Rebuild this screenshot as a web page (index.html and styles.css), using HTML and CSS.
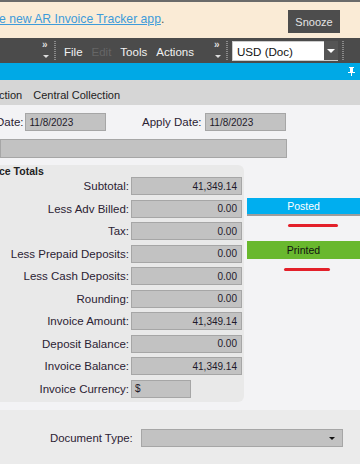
FILE: index.html
```html
<!DOCTYPE html>
<html lang="en">
<head>
    <meta charset="UTF-8">
    <meta name="viewport" content="width=device-width, initial-scale=1.0">
    <title>AR Invoice</title>
    <link rel="stylesheet" href="styles.css">
</head>
<body>
    <div class="top-line"></div>

    <div class="banner">
        <p class="banner-text"><a href="#" class="banner-link">e new AR Invoice Tracker app</a>.</p>
        <button class="snooze-btn">Snooze</button>
    </div>

    <div class="toolbar">
        <div class="overflow">
            <span class="chevron">&raquo;</span>
            <span class="overflow-arrow"></span>
        </div>
        <span class="grip"></span>
        <nav class="menu">
            <span class="menu-item">File</span>
            <span class="menu-item disabled">Edit</span>
            <span class="menu-item">Tools</span>
            <span class="menu-item">Actions</span>
        </nav>
        <div class="overflow">
            <span class="chevron">&raquo;</span>
            <span class="overflow-arrow"></span>
        </div>
        <span class="grip"></span>
        <div class="currency-select">
            <span class="currency-value">USD (Doc)</span>
            <span class="currency-btn"><span class="arrow-white"></span></span>
        </div>
        <span class="grip"></span>
    </div>

    <div class="title-bar">
        <svg class="pin" width="7" height="9" viewBox="0 0 7 9">
            <rect x="1" y="0" width="5" height="1" fill="#fff"/>
            <rect x="2" y="1" width="3" height="4" fill="#fff"/>
            <rect x="0" y="5" width="7" height="1" fill="#fff"/>
            <rect x="3" y="6" width="1" height="3" fill="#fff"/>
        </svg>
    </div>

    <div class="tabs">
        <span class="tab first">ction</span>
        <span class="tab">Central Collection</span>
    </div>

    <main class="content">
        <div class="date-row">
            <label class="date-label">Date:</label>
            <div class="field date-field">11/8/2023</div>
            <label class="apply-label">Apply Date:</label>
            <div class="field date-field">11/8/2023</div>
        </div>

        <div class="field wide-field"></div>

        <div class="totals-area">
            <section class="totals-panel">
                <h2 class="totals-title">ce Totals</h2>
                <div class="totals-grid">
                    <label>Subtotal:</label><div class="field amount">41,349.14</div>
                    <label>Less Adv Billed:</label><div class="field amount">0.00</div>
                    <label>Tax:</label><div class="field amount">0.00</div>
                    <label>Less Prepaid Deposits:</label><div class="field amount">0.00</div>
                    <label>Less Cash Deposits:</label><div class="field amount">0.00</div>
                    <label>Rounding:</label><div class="field amount">0.00</div>
                    <label>Invoice Amount:</label><div class="field amount">41,349.14</div>
                    <label>Deposit Balance:</label><div class="field amount">0.00</div>
                    <label>Invoice Balance:</label><div class="field amount">41,349.14</div>
                    <label>Invoice Currency:</label><div class="field currency">$</div>
                </div>
            </section>

            <aside class="status-col">
                <div class="status posted">Posted</div>
                <span class="mark mark-posted"></span>
                <div class="status printed">Printed</div>
                <span class="mark mark-printed"></span>
            </aside>
        </div>
    </main>

    <section class="doc-section">
        <label class="doc-label">Document Type:</label>
        <div class="field doc-select"><span class="arrow-black"></span></div>
    </section>
</body>
</html>
```

FILE: styles.css
```css
* {
    margin: 0;
    padding: 0;
    box-sizing: border-box;
}

body {
    width: 360px;
    height: 464px;
    overflow: hidden;
    font-family: 'Liberation Sans', Arial, sans-serif;
    color: #2b2233;
    background-color: #ebebeb;
}

.top-line {
    height: 2px;
    background: #6a6a6a;
}

/* Banner */
.banner {
    height: 36px;
    background: #faebd6;
    display: flex;
    align-items: center;
    justify-content: space-between;
    padding-right: 20px;
}

.banner-text {
    font-size: 12.2px;
    color: #555;
    margin-left: -1px;
    margin-top: -2px;
}

.banner-link {
    color: #3d9bda;
    text-decoration: underline;
}

.snooze-btn {
    width: 52px;
    height: 23px;
    border: none;
    background: #4d4d4d;
    color: #e4e4e4;
    font-family: inherit;
    font-size: 11px;
    margin-top: 3px;
}

/* Toolbar */
.toolbar {
    height: 25px;
    background: #4b4b4b;
    display: flex;
    align-items: center;
    padding-left: 41px;
}

.overflow {
    width: 9px;
    height: 20px;
    position: relative;
}

.chevron {
    position: absolute;
    top: -2px;
    left: 1px;
    color: #ddd;
    font-size: 10px;
    font-weight: bold;
    line-height: 12px;
}

.overflow-arrow {
    position: absolute;
    left: 2px;
    top: 14px;
    border-left: 3px solid transparent;
    border-right: 3px solid transparent;
    border-top: 3px solid #ddd;
}

.grip {
    width: 2px;
    height: 19px;
    margin: 0 4px;
    background: repeating-linear-gradient(to bottom, #8a8a8a 0 1px, transparent 1px 2px);
}

.menu {
    display: flex;
    gap: 9px;
    padding: 2px 19px 0 4px;
}

.menu-item {
    color: #f2f2f2;
    font-size: 11.5px;
}

.menu-item.disabled {
    color: #666;
}

.currency-select {
    width: 106px;
    height: 20px;
    background: #fff;
    display: flex;
    align-items: center;
    justify-content: space-between;
    padding-left: 4px;
    border: 1px solid #ccc;
    border-right: none;
}

.currency-value {
    font-size: 11.6px;
    color: #111;
    padding-top: 1px;
}

.currency-btn {
    width: 14px;
    height: 19px;
    background: #555;
    display: flex;
    align-items: center;
    justify-content: center;
}

.arrow-white {
    border-left: 4px solid transparent;
    border-right: 4px solid transparent;
    border-top: 4px solid #fff;
}

/* Blue title bar */
.title-bar {
    height: 17px;
    background: #00a9e6;
    display: flex;
    justify-content: flex-end;
    align-items: center;
    padding-right: 5px;
}

/* Tabs */
.tabs {
    height: 25px;
    background: #d6d6d6;
    display: flex;
    align-items: center;
    gap: 11px;
    padding-top: 5px;
}

.tab {
    font-size: 11px;
    color: #222;
}

.tab.first {
    margin-left: -1px;
}

/* Content */
.content {
    background: #f3f3f5;
    padding-top: 8px;
    padding-bottom: 8px;
}

.field {
    background: #c2c2c2;
    border: 1px solid #a6a6a6;
    font-size: 10px;
    color: #1f1a2a;
    height: 18px;
    display: flex;
    align-items: center;
}

.date-row {
    display: flex;
    align-items: center;
    font-size: 11.5px;
}

.date-label {
    white-space: nowrap;
    margin-left: -4px;
    padding-right: 1px;
}

.date-field {
    width: 81px;
    padding-left: 4px;
}

.apply-label {
    width: 99px;
    text-align: right;
    padding-right: 3px;
}

.wide-field {
    width: 287px;
    height: 19px;
    margin-top: 8px;
}

.totals-area {
    display: flex;
    margin-top: 7px;
}

.totals-panel {
    width: 244px;
    height: 237px;
    background: #e9e9e9;
    border-radius: 0 6px 6px 0;
}

.totals-title {
    font-size: 10.5px;
    font-weight: bold;
    color: #222;
    height: 12px;
    line-height: 13px;
    margin-left: -1px;
}

.totals-grid {
    display: grid;
    grid-template-columns: 129px 111px;
    column-gap: 2px;
    row-gap: 4.56px;
    align-items: center;
}

.totals-grid label {
    font-size: 11.5px;
    text-align: right;
    color: #2b2233;
}

.amount {
    justify-content: flex-end;
    padding-right: 4px;
}

.currency {
    width: 60px;
    padding-left: 3px;
}

.status-col {
    flex: 1;
    display: flex;
    flex-direction: column;
    padding-left: 3px;
    padding-top: 33px;
}

.status {
    height: 18px;
    font-size: 10.5px;
    text-align: center;
    line-height: 16px;
}

.posted {
    background: #00aeef;
    color: #fff;
    border-bottom: 2px solid #9c9c9c;
}

.printed {
    background: #69b82e;
    color: #111;
    line-height: 18px;
}

.mark {
    height: 3px;
    border-radius: 2px;
    background: #e3202a;
}

.mark-posted {
    width: 50px;
    margin: 8px 0 14px 41px;
}

.mark-printed {
    width: 46px;
    margin: 9px 0 0 37px;
}

/* Document type */
.doc-section {
    display: flex;
    align-items: center;
    padding-top: 19px;
    padding-left: 50px;
}

.doc-label {
    font-size: 11.4px;
    width: 91px;
}

.doc-select {
    width: 202px;
    justify-content: flex-end;
    padding-right: 7px;
}

.arrow-black {
    border-left: 3px solid transparent;
    border-right: 3px solid transparent;
    border-top: 3px solid #111;
}
```
